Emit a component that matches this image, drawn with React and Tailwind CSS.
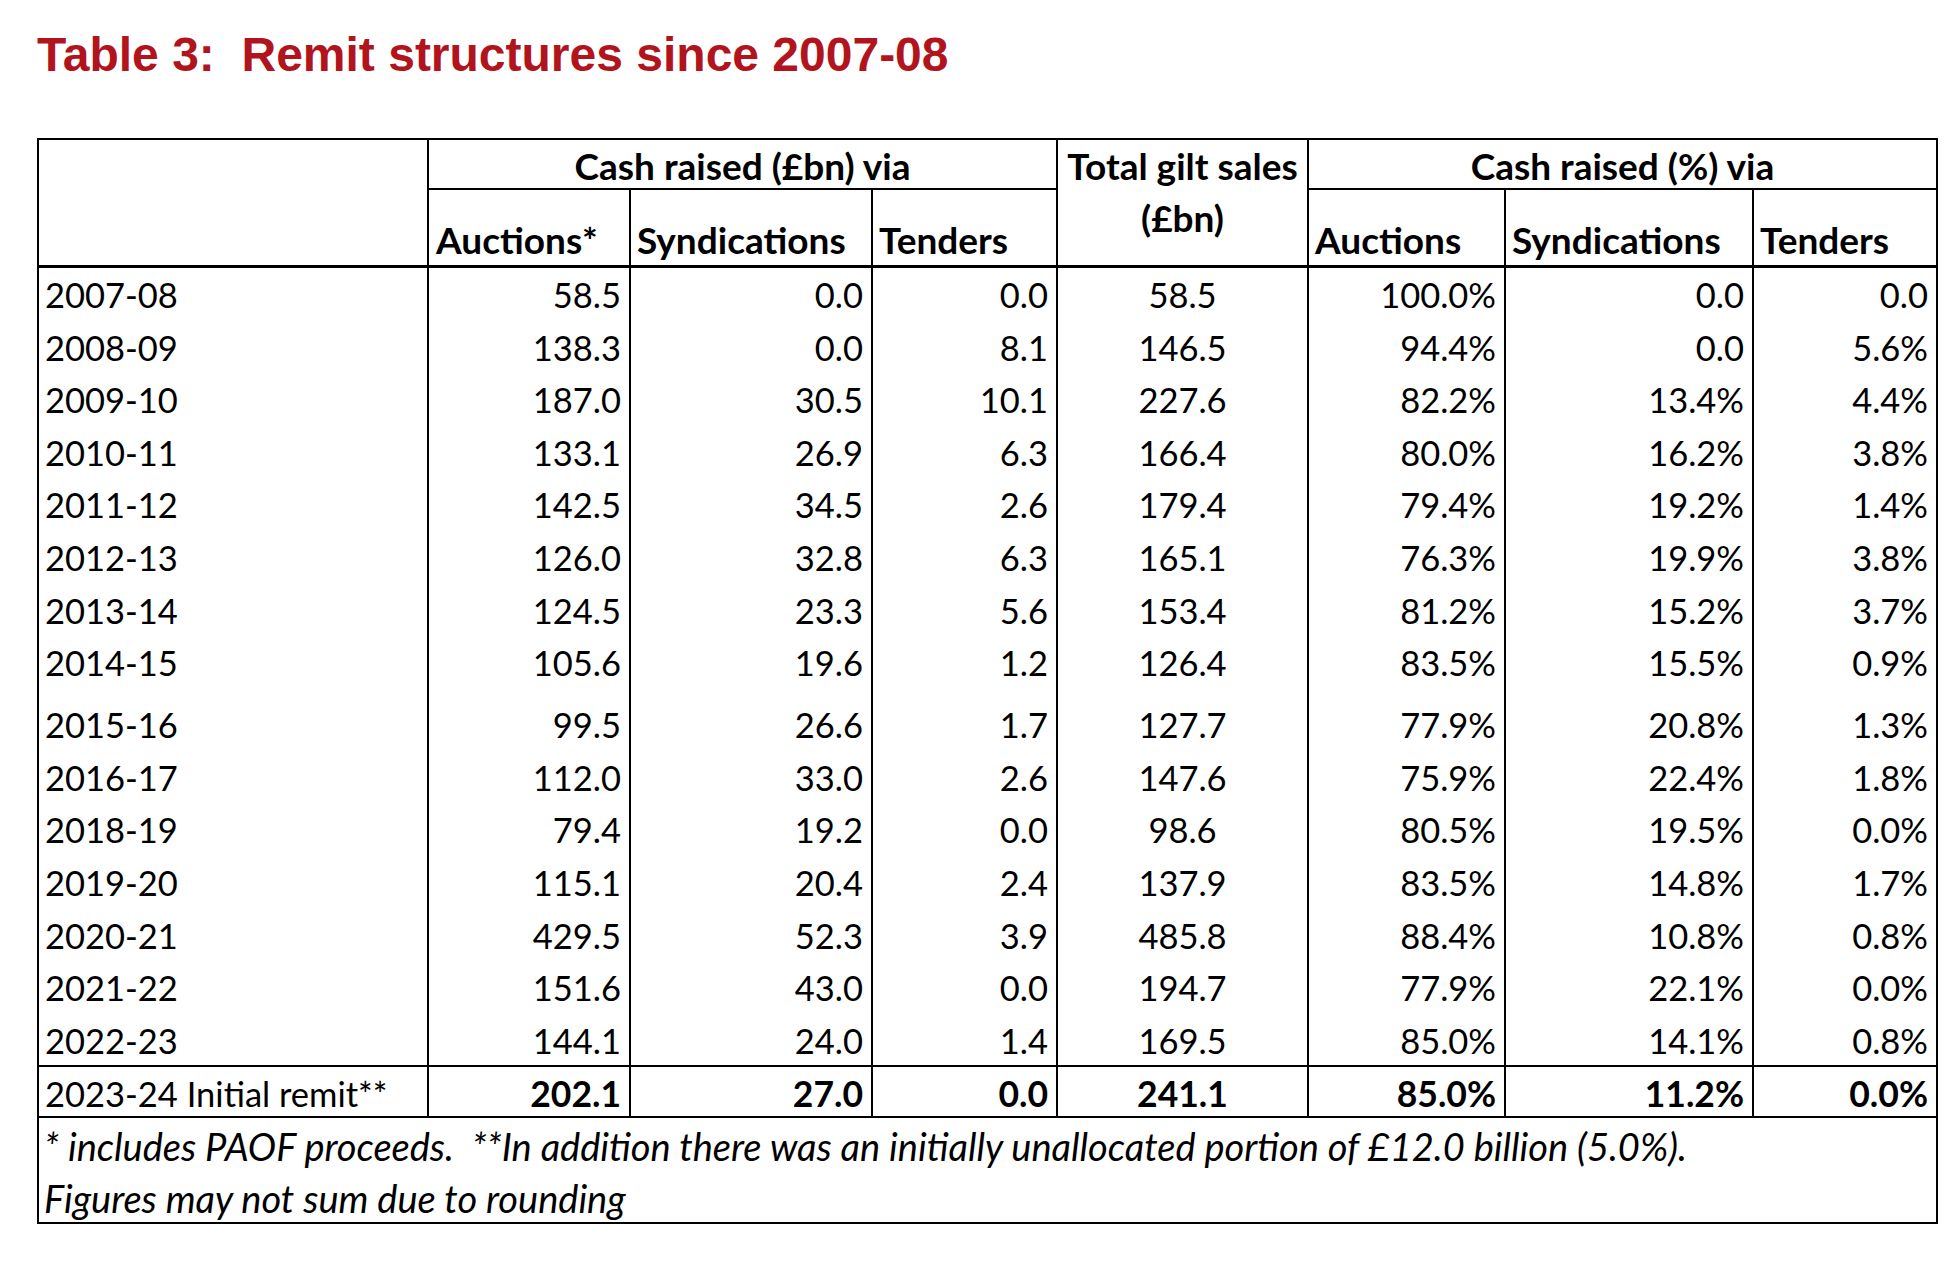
import React from 'react';

const rows = [
  ['2007-08', '58.5', '0.0', '0.0', '58.5', '100.0%', '0.0', '0.0'],
  ['2008-09', '138.3', '0.0', '8.1', '146.5', '94.4%', '0.0', '5.6%'],
  ['2009-10', '187.0', '30.5', '10.1', '227.6', '82.2%', '13.4%', '4.4%'],
  ['2010-11', '133.1', '26.9', '6.3', '166.4', '80.0%', '16.2%', '3.8%'],
  ['2011-12', '142.5', '34.5', '2.6', '179.4', '79.4%', '19.2%', '1.4%'],
  ['2012-13', '126.0', '32.8', '6.3', '165.1', '76.3%', '19.9%', '3.8%'],
  ['2013-14', '124.5', '23.3', '5.6', '153.4', '81.2%', '15.2%', '3.7%'],
  ['2014-15', '105.6', '19.6', '1.2', '126.4', '83.5%', '15.5%', '0.9%'],
  ['2015-16', '99.5', '26.6', '1.7', '127.7', '77.9%', '20.8%', '1.3%'],
  ['2016-17', '112.0', '33.0', '2.6', '147.6', '75.9%', '22.4%', '1.8%'],
  ['2018-19', '79.4', '19.2', '0.0', '98.6', '80.5%', '19.5%', '0.0%'],
  ['2019-20', '115.1', '20.4', '2.4', '137.9', '83.5%', '14.8%', '1.7%'],
  ['2020-21', '429.5', '52.3', '3.9', '485.8', '88.4%', '10.8%', '0.8%'],
  ['2021-22', '151.6', '43.0', '0.0', '194.7', '77.9%', '22.1%', '0.0%'],
  ['2022-23', '144.1', '24.0', '1.4', '169.5', '85.0%', '14.1%', '0.8%'],
];

const total = ['2023-24 Initial remit**', '202.1', '27.0', '0.0', '241.1', '85.0%', '11.2%', '0.0%'];

const cols = 'grid grid-cols-[388px_202px_242px_185px_251px_197px_248px_184px]';

function rowHeight(i) {
  if (i === 0) return 'h-[51px]';
  if (i === 8) return 'h-[62px]';
  return 'h-[52.6px]';
}

function DataRow({ cells, height, bold, pad }) {
  return (
    <div className={`${cols} ${height}`}>
      {cells.map((c, j) => {
        let align = 'justify-end pr-[8px]';
        if (j === 0) align = 'justify-start pl-[6px]';
        if (j === 4) align = 'justify-center';
        return (
          <div
            key={j}
            className={`flex items-end ${align} ${pad} ${j > 0 ? 'border-l-2 border-black' : ''} ${
              bold && j > 0 ? 'font-bold text-[35.5px]' : ''
            }`}
          >
            {c}
          </div>
        );
      })}
    </div>
  );
}

export default function App() {
  return (
    <div className="w-[1952px] h-[1266px] bg-white pl-[37px] text-black">
      <h1 className="pt-[31px] text-[48px] leading-[48px] font-bold text-[#B1141C] font-[family-name:'Liberation_Sans',Arial,sans-serif]">
        Table 3:&nbsp; Remit structures since 2007-08
      </h1>

      <div className="mt-[59px] w-[1901px] border-2 border-black font-[family-name:Lato,sans-serif] text-[34.5px] leading-[40px]">
        {/* header */}
        <div className={`${cols} grid-rows-[50px_75px] border-b-[3px] border-black font-bold text-[37px]`}>
          <div className="row-span-2" />
          <div className="col-span-3 flex items-end justify-center border-l-2 border-b-2 border-black pb-[6px] leading-[33px]">
            Cash raised (£bn) via
          </div>
          <div className="row-span-2 border-l-2 border-black text-center leading-[52px]">
            Total gilt sales
            <br />
            (£bn)
          </div>
          <div className="col-span-3 flex items-end justify-center border-l-2 border-b-2 border-black pb-[6px] leading-[33px]">
            Cash raised (%) via
          </div>
          <div className="flex items-end border-l-2 border-black pl-[7px] pb-[5px]">Auctions*</div>
          <div className="flex items-end border-l-2 border-black pl-[6px] pb-[5px]">Syndications</div>
          <div className="flex items-end border-l-2 border-black pl-[6px] pb-[5px]">Tenders</div>
          <div className="flex items-end border-l-2 border-black pl-[6px] pb-[5px]">Auctions</div>
          <div className="flex items-end border-l-2 border-black pl-[6px] pb-[5px]">Syndications</div>
          <div className="flex items-end border-l-2 border-black pl-[6px] pb-[5px]">Tenders</div>
        </div>

        {/* body */}
        {rows.map((r, i) => (
          <DataRow key={r[0]} cells={r} height={rowHeight(i)} pad="pb-[4px]" />
        ))}

        <div className="border-y-2 border-black">
          <DataRow cells={total} height="h-[49px]" bold pad="pb-[2px]" />
        </div>

        {/* footnote */}
        <div className="h-[104px] pl-[5px] pt-[15px] italic text-[38px]">
          <div className="leading-[26px]">
            * includes PAOF proceeds.&nbsp; **In addition there was an initially unallocated portion of £12.0 billion (5.0%).
          </div>
          <div className="mt-[26px] leading-[26px]">Figures may not sum due to rounding</div>
        </div>
      </div>
    </div>
  );
}
